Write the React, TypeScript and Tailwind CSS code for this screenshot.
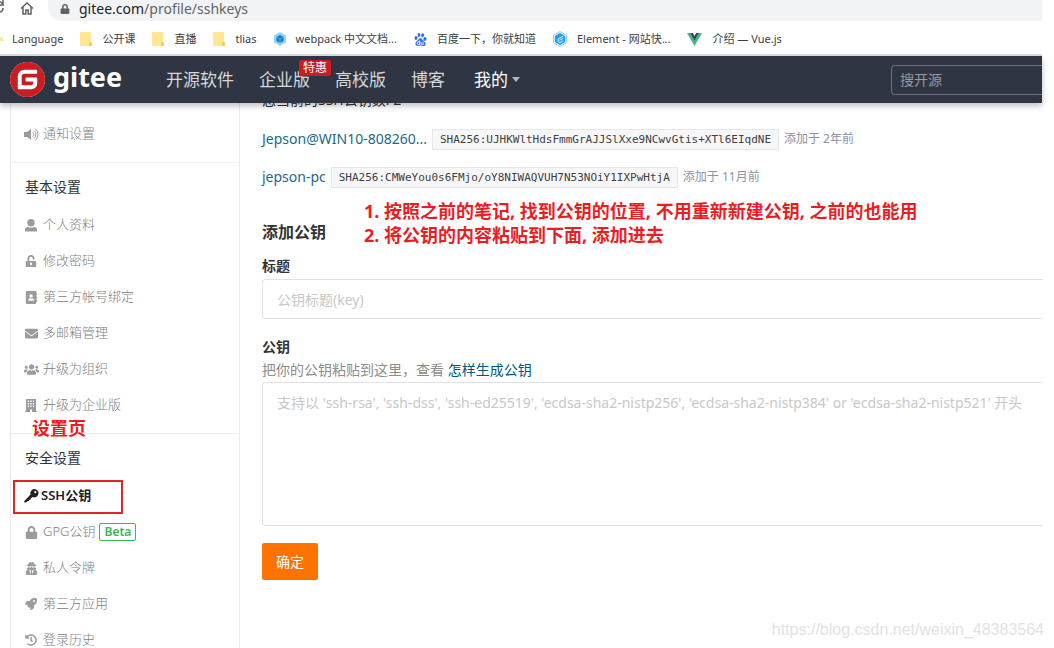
import type { ReactNode } from 'react';
import { FaAddressBook, FaEnvelope, FaHistory, FaLock, FaRocket, FaUnlockAlt, FaUserSecret, FaUsers } from 'react-icons/fa';
import { SiBaidu, SiGitee } from 'react-icons/si';

const FolderIcon = () => (
  <svg width="12" height="14" viewBox="0 0 12 14">
    <path d="M1 0h9a1 1 0 0 1 1 1v9l1 1v2a1 1 0 0 1-1 1H1a1 1 0 0 1-1-1V1a1 1 0 0 1 1-1z" fill="#ffe694" />
    <path d="M9 14v-3l1-1h1l1 1v2a1 1 0 0 1-1 1z" fill="#f5cd55" />
  </svg>
);

const WebpackIcon = () => (
  <svg width="12" height="14" viewBox="0 0 12 14">
    <path d="M6 0l6 3.5v7L6 14l-6-3.5v-7z" fill="#8ed6fb" />
    <path d="M6 3l3.6 2v4L6 11 2.4 9V5z" fill="#1c78c0" />
    <path d="M2.4 5L6 7l3.6-2M6 7v4" fill="none" stroke="#8ed6fb" strokeWidth=".5" />
  </svg>
);

const ElementIcon = () => (
  <svg width="14" height="16" viewBox="0 0 14 16">
    <path d="M7 .5l6.5 3.7v7.6L7 15.5.5 11.8V4.2z" fill="#fff" stroke="#8cc8ff" />
    <path d="M7 2l5.200 3v6L7 14l-5.200-3V5z" fill="#1e9bff" />
    <path d="M10.200 5L5 8v2.500L7 11.700l3.200-1.900M10.200 7.200L6.500 9.300" fill="none" stroke="#fff" strokeWidth=".9" />
  </svg>
);

const VueIcon = () => (
  <svg width="15" height="13" viewBox="0 0 15 13">
    <path d="M0 0h3l4.500 7.600L12 0h3L7.500 13z" fill="#41b883" />
    <path d="M3 0h2.800l1.700 3L9.200 0H12L7.500 7.700z" fill="#35495e" />
  </svg>
);

const VolumeIcon = () => (
  <svg width="15" height="13" viewBox="0 0 15 13" fill="none" stroke="currentColor">
    <path d="M0 4h3l4-3v11L3 9H0z" fill="currentColor" stroke="none" />
    <path d="M8.700 4.500a2.500 2.500 0 0 1 0 4M10 2.600a5 5 0 0 1 0 7.800M11.300.800a7.200 7.200 0 0 1 0 11.400" />
  </svg>
);

const UserIcon = () => (
  <svg width="12" height="13" viewBox="0 0 12 13" fill="currentColor">
    <circle cx="6" cy="3.800" r="3.700" />
    <path d="M0 12.500v-1.500C0 9 1.200 8.200 3 8c2 1 4 1 6 0 1.800.200 3 1 3 3v1.500z" />
  </svg>
);

const BuildingIcon = () => (
  <svg width="12" height="13" viewBox="0 0 12 13">
    <path d="M1 0h10v12h1v1H7v-2.500H5V13H0v-1h1z" fill="currentColor" />
    <path d="M3.500 1.500v7.500M6 1.500v7.500M8.500 1.500v7.500" stroke="#fff" strokeWidth="1.300" strokeDasharray="1.500 1" />
  </svg>
);

const KeyIcon = () => (
  <svg width="15" height="14" viewBox="0 0 15 14">
    <path d="M10.300 0a4.200 4.200 0 1 1-1.800 8L6.800 9.500l-.200 1.200-1.400.100-.200 1.300-1.500.100L2 13.600H.300v-1.700L6.600 5.600A4.200 4.200 0 0 1 10.300 0z" fill="currentColor" />
    <circle cx="11.300" cy="3.200" r="1.100" fill="#fff" />
  </svg>
);

const bookmarks: { label: string; icon: ReactNode }[] = [
  { label: '公开课', icon: <FolderIcon /> },
  { label: '直播', icon: <FolderIcon /> },
  { label: 'tlias', icon: <FolderIcon /> },
  { label: 'webpack 中文文档...', icon: <WebpackIcon /> },
  { label: '百度一下，你就知道', icon: <SiBaidu size={13} color="#2f6ff0" /> },
  { label: 'Element - 网站快...', icon: <ElementIcon /> },
  { label: '介绍 — Vue.js', icon: <VueIcon /> },
];

const basicItems = [
  { label: '个人资料', icon: <UserIcon /> },
  { label: '修改密码', icon: <FaUnlockAlt size={12} /> },
  { label: '第三方帐号绑定', icon: <FaAddressBook size={13} /> },
  { label: '多邮箱管理', icon: <FaEnvelope size={13} /> },
  { label: '升级为组织', icon: <FaUsers size={15} /> },
  { label: '升级为企业版', icon: <BuildingIcon /> },
];

const keys = [
  { name: 'Jepson@WIN10-808260...', hash: 'SHA256:UJHKWltHdsFmmGrAJJSlXxe9NCwvGtis+XTl6EIqdNE', time: '添加于 2年前' },
  { name: 'jepson-pc', hash: 'SHA256:CMWeYou0s6FMjo/oY8NIWAQVUH7N53NOiY1IXPwHtjA', time: '添加于 11月前' },
];

function SideItem({ icon, label, active, beta }: { icon?: ReactNode; label: string; active?: boolean; beta?: boolean }) {
  return (
    <a
      href="#"
      className={`flex h-9 items-center pl-3 text-[13px] ${active ? 'gap-[2px] font-semibold text-[#222]' : 'gap-1 font-light text-[#808080]'}`}
    >
      <span className={`flex w-4 justify-center ${active ? '' : 'text-[#9b9b9b]'}`}>{icon}</span>
      {label}
      {beta && <span className="rounded-xs border border-[#3cb952] px-1 text-xs leading-4 font-semibold text-[#3cb952]">Beta</span>}
    </a>
  );
}

function SideHeading({ children }: { children: ReactNode }) {
  return <h3 className="mt-1 flex h-10 items-center pl-[14px] text-sm text-[#333]">{children}</h3>;
}

export default function App() {
  return (
    <div className="relative h-screen overflow-hidden bg-white pr-3 font-['Noto_Sans','Noto_Sans_CJK_SC',sans-serif]">
      {/* Barre d'adresse */}
      <div className="flex h-[21px] items-start">
        <svg className="mr-4 shrink-0" width="4" height="14" viewBox="0 0 4 14" fill="none" stroke="#5f6368" strokeWidth="1.500">
          <path d="M0 1.500L3 4V0M0 5h4M3 8a4 4 0 0 1-3 4" />
        </svg>
        <svg className="mt-[2px] shrink-0" width="14" height="13" viewBox="0 0 14 13" fill="none" stroke="#5f6368" strokeWidth="1.500">
          <path d="M1 6.500l6-5.500 6 5.500M3 5v7h2.800V8h2.400v4H11V5" />
        </svg>
        <div className="ml-[14px] flex h-[21px] grow items-start rounded-bl-[14px] bg-[#f1f3f4] pl-3 text-sm leading-[18px] text-[#5f6368]">
          <FaLock size={10} className="mt-1 mr-[9px]" />
          <span><span className="text-[#202124]">gitee.com</span>/profile/sshkeys</span>
        </div>
      </div>

      {/* Favoris */}
      <div className="flex h-[35px] items-center gap-[17px] border-b-2 border-[#dddfe2] pt-[3px] text-[11px] whitespace-nowrap text-[#3c4043]">
        <a href="#" className="flex items-center gap-[9px]">
          <span className="flex w-[3px] justify-end overflow-hidden"><FolderIcon /></span>
          <span>Language</span>
        </a>
        {bookmarks.map((b) => (
          <a key={b.label} href="#" className="flex items-center gap-[10px]">
            {b.icon}
            {b.label}
          </a>
        ))}
      </div>

      <header className="relative z-10 flex h-[47px] items-center bg-[#2f3542] shadow-[0_3px_6px_rgba(0,0,0,0.25)]">
        <a href="#" className="flex w-[156px] shrink-0 items-center gap-2 pl-[10px]">
          <span className="rounded-full bg-white"><SiGitee size={35} color="#c71d23" /></span>
          <span className="pb-[6px] text-[27px] leading-8 font-bold text-white">gitee</span>
        </a>
        <nav className="ml-[10px] flex shrink-0 gap-[25px] text-[17px] leading-6 text-[#d5d7d9]">
          <a href="#">开源软件</a>
          <a href="#" className="relative">
            企业版
            <span className="absolute -top-2 left-10 rounded-xs bg-[#c71d23] px-1 text-xs leading-4 whitespace-nowrap text-white">特惠</span>
          </a>
          <a href="#">高校版</a>
          <a href="#">博客</a>
          <a href="#" className="ml-1 flex items-center gap-1 text-white">
            我的
            <svg width="8" height="5" viewBox="0 0 8 5" fill="#b5b7bc"><path d="M0 0h8L4 5z" /></svg>
          </a>
        </nav>
        <input
          aria-label="搜开源"
          placeholder="搜开源"
          className="ml-auto h-[30px] w-[151px] shrink-0 rounded-l-sm border border-r-0 border-[#6a6f79] bg-transparent px-2 text-sm outline-none placeholder:text-[#9599a0]"
        />
      </header>

      {/* Contenu défilé sous l'en-tête */}
      <div className="-mt-[23px] flex">
        <aside className="ml-[10px] w-[230px] shrink-0 border-x border-[#ebebeb]">
          <div className="border-b border-[#f3f3f3] pb-[10px]">
            <SideItem label="WebHooks" />
            <SideItem label="通知设置" icon={<VolumeIcon />} />
          </div>
          <div className="border-b border-[#ebebeb] pb-[10px]">
            <SideHeading>基本设置</SideHeading>
            {basicItems.map((item) => <SideItem key={item.label} {...item} />)}
          </div>
          <SideHeading>安全设置</SideHeading>
          <SideItem label="SSH公钥" icon={<KeyIcon />} active />
          <SideItem label="GPG公钥" icon={<FaLock size={13} />} beta />
          <SideItem label="私人令牌" icon={<FaUserSecret size={13} />} />
          <SideItem label="第三方应用" icon={<FaRocket size={12} />} />
          <SideItem label="登录历史" icon={<FaHistory size={12} />} />
        </aside>

        <main className="min-w-0 grow pl-[22px] text-sm text-[#333]">
          <p className="flex h-10 items-center">您当前的SSH公钥数: 2</p>
          {keys.map((k) => (
            <div key={k.name} className="flex h-[38px] items-center whitespace-nowrap">
              <a href="#" className="text-[#1a6a85]">{k.name}</a>
              <code className="mx-[5px] w-[347px] border border-[#e6e7eb] bg-[#f7f7f9] text-center font-['DejaVu_Sans_Mono',monospace] text-[11px] leading-[19px] text-[#404040]">{k.hash}</code>
              <span className="text-xs text-[#8c92a4]">{k.time}</span>
            </div>
          ))}
          <h2 className="mt-6 text-base leading-6 font-bold">添加公钥</h2>
          <form>
            <label htmlFor="title" className="mt-[10px] mb-px block leading-6 font-bold">标题</label>
            <input id="title" placeholder="公钥标题(key)" className="block h-10 w-full rounded-l-sm border border-r-0 border-[#dfe1e8] px-[14px] outline-none placeholder:text-[#c8c8c8]" />
            <label htmlFor="key" className="mt-4 block leading-6 font-bold">公钥</label>
            <p className="mb-px leading-[22px] text-[#8c8c8c]">
              把你的公钥粘贴到这里，查看 <a href="#" className="text-[#005980]">怎样生成公钥</a>
            </p>
            <textarea
              id="key"
              placeholder="支持以 'ssh-rsa', 'ssh-dss', 'ssh-ed25519', 'ecdsa-sha2-nistp256', 'ecdsa-sha2-nistp384' or 'ecdsa-sha2-nistp521' 开头"
              className="block h-36 w-full resize-none rounded-l-sm border border-r-0 border-[#dfe1e8] px-[14px] py-[10px] leading-5 outline-none placeholder:text-[#c8c8c8]"
            />
            <button type="button" className="mt-[17px] h-[37px] rounded-xs bg-[#fe7300] px-[14px] text-white">确定</button>
          </form>
        </main>
      </div>

      {/* Annotations rouges */}
      <div className="absolute top-[199px] left-[364px] z-20 text-lg leading-6 font-bold whitespace-nowrap text-[#ed1c24]">
        <p>1. 按照之前的笔记, 找到公钥的位置, 不用重新新建公钥, 之前的也能用</p>
        <p>2. 将公钥的内容粘贴到下面, 添加进去</p>
      </div>
      <p className="absolute top-[416px] left-8 z-20 text-lg leading-6 font-bold text-[#ed1c24]">设置页</p>
      <div className="absolute top-[480px] left-[13px] h-[34px] w-[110px] border-2 border-[#e0242b]" />
      <p className="absolute right-[10px] bottom-[6px] font-['Liberation_Sans',sans-serif] text-base text-[#e2e2e2]">https://blog.csdn.net/weixin_48383564</p>
    </div>
  );
}
